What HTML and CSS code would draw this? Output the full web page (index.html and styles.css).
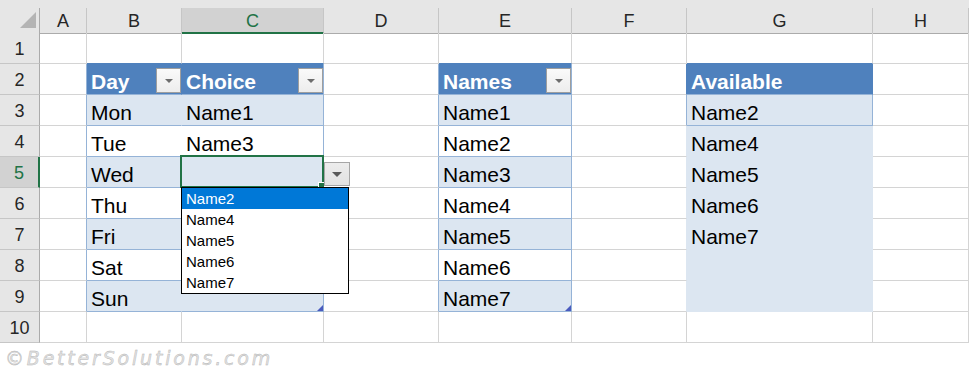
FILE: index.html
```html
<!DOCTYPE html>
<html lang="en">
<head>
  <meta charset="UTF-8">
  <title>Data Validation – Available Names</title>
  <link rel="stylesheet" href="styles.css">
</head>
<body>
  <div class="sheet">
    <!-- column headers -->
    <div class="heads">
      <div class="ch corner">
        <svg width="16" height="16" viewBox="0 0 16 16"><polygon points="16,0 16,16 0,16" fill="#b4b4b4"/></svg>
      </div>
      <div class="ch">A</div>
      <div class="ch">B</div>
      <div class="ch sel">C</div>
      <div class="ch">D</div>
      <div class="ch">E</div>
      <div class="ch">F</div>
      <div class="ch">G</div>
      <div class="ch">H</div>
    </div>

    <div class="grid">
      <div class="rh">1</div>
      <div class="c"></div><div class="c ab"></div><div class="c ab"></div><div class="c"></div>
      <div class="c ab"></div><div class="c"></div><div class="c ab"></div><div class="c"></div>

      <div class="rh">2</div>
      <div class="c ta"></div>
      <div class="c hd in"><span>Day</span><span class="filter"></span></div>
      <div class="c hd"><span>Choice</span><span class="filter"></span></div>
      <div class="c ta"></div>
      <div class="c hd"><span>Names</span><span class="filter"></span></div>
      <div class="c fh"></div>
      <div class="c hd in"><span>Available</span></div>
      <div class="c"></div>

      <div class="rh">3</div>
      <div class="c ta"></div>
      <div class="c bd band in">Mon</div><div class="c bd band">Name1</div>
      <div class="c ta"></div>
      <div class="c bd band">Name1</div>
      <div class="c ta"></div>
      <div class="c bd band">Name2</div>
      <div class="c"></div>

      <div class="rh">4</div>
      <div class="c ta"></div>
      <div class="c bd in">Tue</div><div class="c bd">Name3</div>
      <div class="c ta"></div>
      <div class="c bd">Name2</div>
      <div class="c fl"></div>
      <div class="c fill">Name4</div>
      <div class="c"></div>

      <div class="rh sel">5</div>
      <div class="c ta"></div>
      <div class="c bd band in">Wed</div><div class="c bd band"></div>
      <div class="c ta"></div>
      <div class="c bd band">Name3</div>
      <div class="c fl"></div>
      <div class="c fill">Name5</div>
      <div class="c"></div>

      <div class="rh">6</div>
      <div class="c ta"></div>
      <div class="c bd in">Thu</div><div class="c bd"></div>
      <div class="c ta"></div>
      <div class="c bd">Name4</div>
      <div class="c fl"></div>
      <div class="c fill">Name6</div>
      <div class="c"></div>

      <div class="rh">7</div>
      <div class="c ta"></div>
      <div class="c bd band in">Fri</div><div class="c bd band"></div>
      <div class="c ta"></div>
      <div class="c bd band">Name5</div>
      <div class="c fl"></div>
      <div class="c fill">Name7</div>
      <div class="c"></div>

      <div class="rh">8</div>
      <div class="c ta"></div>
      <div class="c bd in">Sat</div><div class="c bd"></div>
      <div class="c ta"></div>
      <div class="c bd">Name6</div>
      <div class="c fl"></div>
      <div class="c fill"></div>
      <div class="c"></div>

      <div class="rh">9</div>
      <div class="c ta"></div>
      <div class="c bd band in">Sun</div><div class="c bd band end"></div>
      <div class="c ta"></div>
      <div class="c bd band end">Name7</div>
      <div class="c fl"></div>
      <div class="c fill"></div>
      <div class="c"></div>

      <div class="rh">10</div>
      <div class="c"></div><div class="c"></div><div class="c"></div><div class="c"></div>
      <div class="c"></div><div class="c"></div><div class="c"></div><div class="c"></div>
    </div>

    <!-- active cell C5 with its validation list -->
    <div class="active"><span class="handle"></span></div>
    <div class="dropbtn"><span class="arrow"></span></div>
    <ul class="list">
      <li class="on">Name2</li>
      <li>Name4</li>
      <li>Name5</li>
      <li>Name6</li>
      <li>Name7</li>
    </ul>
  </div>
  <div class="mark">©BetterSolutions.com</div>
</body>
</html>
```

FILE: styles.css
```css
:root {
  --cols: 40px 47px 95px 142px 115px 133px 115px 186px 96px;
  --grid: #d4d4d4;
  --head-bg: #e6e6e6;
  --head-line: #c6c6c6;
  --head-edge: #ababab;
  --green: #217346;
  --tbl-head: #4f81bd;
  --tbl-line: #95b3d7;
  --tbl-band: #dce6f1;
}
*, *::before, *::after { box-sizing: border-box; margin: 0; padding: 0; }
body {
  width: 969px; height: 374px; overflow: hidden;
  background: #fff; color: #000;
  font-family: "Liberation Sans", Arial, sans-serif;
}
.sheet { position: relative; }

/* headers */
.heads, .grid { display: grid; grid-template-columns: var(--cols); }
.heads { background: var(--head-bg); padding-top: 8px; height: 33px; }
.ch {
  border-right: 1px solid var(--head-line); border-bottom: 1px solid var(--head-edge);
  font-size: 18px; line-height: 21px; padding-top: 3px;
  text-align: center; color: #262626;
}
.ch.corner {
  border-right-color: var(--head-edge);
  display: flex; justify-content: flex-end; align-items: flex-start;
  padding: 4px 3px 0 0;
}
.ch.sel { background: #d2d2d2; color: var(--green); border-bottom: 2px solid var(--green); }
.grid { grid-auto-rows: 31px; }
.rh {
  background: var(--head-bg); color: #262626;
  border-right: 1px solid var(--head-edge); border-bottom: 1px solid var(--head-line);
  font-size: 18px; line-height: 27px; padding-top: 3px; text-align: center;
}
.rh.sel { background: #d2d2d2; color: var(--green); border-right: 2px solid var(--green); }

/* cells */
.c {
  position: relative;
  border-right: 1px solid var(--grid); border-bottom: 1px solid var(--grid);
  display: flex; align-items: flex-end; justify-content: space-between;
  padding-left: 4px; font-size: 21px; line-height: 24px;
  white-space: nowrap; overflow: hidden;
}
.c.ab { border-bottom-color: var(--tbl-head); }
.c.ta { border-right-color: var(--tbl-line); }
.c.fh { border-right-color: var(--tbl-head); }
.c.fl { border-right-color: var(--tbl-band); }
.c.hd {
  background: var(--tbl-head); color: #fff; font-weight: bold;
  border-right-color: var(--tbl-line); border-bottom-color: var(--tbl-line);
}
.c.bd { background: #fff; border-right-color: var(--tbl-line); border-bottom-color: var(--tbl-line); }
.c.band { background: var(--tbl-band); }
.c.in { border-right-color: transparent; }
.c.fill { background: var(--tbl-band); border-color: transparent; }
.c.end::after {
  content: ""; position: absolute; right: 0; bottom: 0;
  width: 6px; height: 6px; background: #4a5bbf;
  clip-path: polygon(100% 0, 100% 100%, 0 100%);
}

.filter {
  width: 25px; height: 25px; margin-bottom: 1px; flex: none;
  background: linear-gradient(#fafafa, #ededed);
  border: 1px solid #9e9e9e;
  display: flex; align-items: center; justify-content: center;
}
.filter::before, .arrow {
  content: ""; width: 0; height: 0;
  border-left: 4px solid transparent; border-right: 4px solid transparent;
  border-top: 4px solid #6d6d6d;
}

/* active cell + validation dropdown */
.active {
  position: absolute; left: 180px; top: 155px; width: 144px; height: 33px;
  border: 2px solid var(--green);
}
.handle {
  position: absolute; right: -3px; bottom: -3px; width: 7px; height: 7px;
  background: var(--green); border: 1px solid #fff;
}
.dropbtn {
  position: absolute; left: 324px; top: 162px; width: 26px; height: 24px;
  background: linear-gradient(#ececec, #e2e2e2); border: 1px solid #a6a6a6;
  display: flex; align-items: center; justify-content: center;
}
.dropbtn .arrow { border-left-width: 5px; border-right-width: 5px; border-top: 5px solid #595959; }
.list {
  position: absolute; left: 181px; top: 187px; width: 168px; height: 107px;
  list-style: none; background: #fff; border: 1px solid #000;
  font-size: 15px;
}
.list li { height: 21px; line-height: 21px; padding-left: 4px; }
.list li.on { background: #0078d7; color: #fff; }

.mark {
  height: 31px; padding-left: 5px;
  font-family: "DejaVu Sans", sans-serif; font-style: italic; font-size: 19px;
  line-height: 31px; letter-spacing: 2.8px;
  color: #e2e2e2; -webkit-text-stroke: 0.4px #b2b2b2;
}
```
